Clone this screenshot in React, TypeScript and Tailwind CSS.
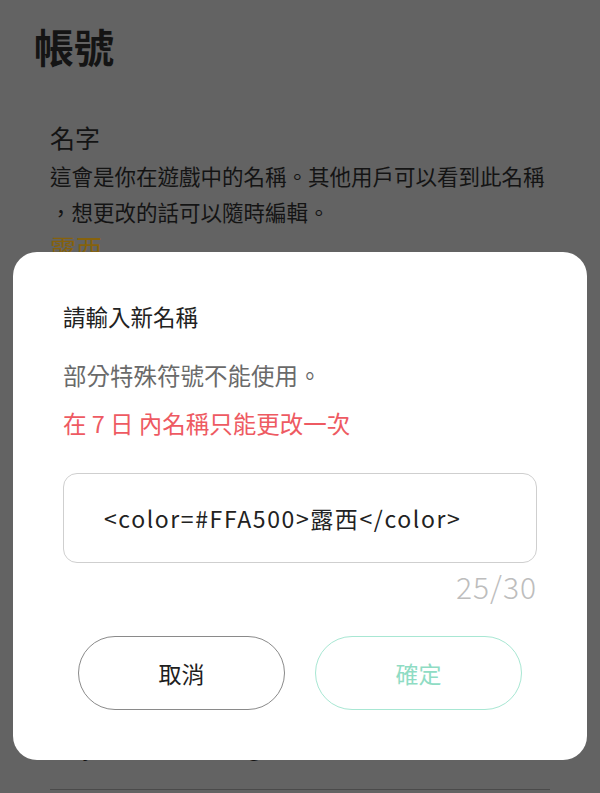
const cjk = { fontFamily: '"Noto Sans CJK TC", "Noto Sans", sans-serif' };

export default function App() {
  return (
    <div className="relative w-[600px] h-[793px] overflow-hidden bg-[#636363]" style={cjk}>
      {/* page behind the dialog (dimmed) */}
      <div className="flex flex-col pt-[22px]">
        <h1 className="pl-[34px] text-[40px] leading-[48px] font-bold text-[#141414]">帳號</h1>
        <div className="px-[50px] mt-[51px]">
          <div className="text-[25px] leading-[32px] text-[#141414]">名字</div>
          <p className="mt-[5px] text-[21.5px] leading-[36px] text-[#141414] whitespace-nowrap">
            這會是你在遊戲中的名稱。其他用戶可以看到此名稱
            <br />
            ，想更改的話可以隨時編輯。
          </p>
          <div className="mt-[2px] text-[26px] leading-[32px] text-[#86620c]">露西</div>
        </div>
        <div className="px-[50px] mt-[467px]">
          <div className="text-[22px] leading-[30px] text-[#141414]">Player data &amp; settings</div>
        </div>
        <div className="mx-[50px] mt-[28px] h-px bg-[#4a4a4a]" />
      </div>

      {/* dialog */}
      <div className="absolute left-[13px] top-[252px] w-[574px] rounded-[24px] bg-white px-[50px] pt-[48px] pb-[50px]">
        <div className="text-[22.5px] leading-[32px] text-[#222]">請輸入新名稱</div>
        <div className="mt-[27px] text-[23.5px] leading-[32px] text-[#6a6a6a]">部分特殊符號不能使用。</div>
        <div className="mt-[16px] text-[23.5px] leading-[32px] text-[#ee5a62]">在 7 日 內名稱只能更改一次</div>
        <div className="mt-[34px] h-[90px] rounded-[14px] border-[1.5px] border-[#cfcfcf] flex items-center pl-[40px]">
          <span className="text-[23px] tracking-[1.6px] text-[#222] whitespace-nowrap">&lt;color=#FFA500&gt;露西&lt;/color&gt;</span>
        </div>
        <div className="mt-[7px] text-right text-[30px] leading-[32px] font-light tracking-[1px] text-[#bdbdbd]">25/30</div>
        <div className="mt-[34px] flex justify-center gap-[30px]">
          <button className="w-[207px] h-[74px] rounded-full border-[1.5px] border-[#8a8a8a] text-[23px] text-[#1e1e1e]">
            取消
          </button>
          <button className="w-[207px] h-[74px] rounded-full border-[1.5px] border-[#a8e7d3] text-[23px] text-[#8fdcc4]">
            確定
          </button>
        </div>
      </div>
    </div>
  );
}
